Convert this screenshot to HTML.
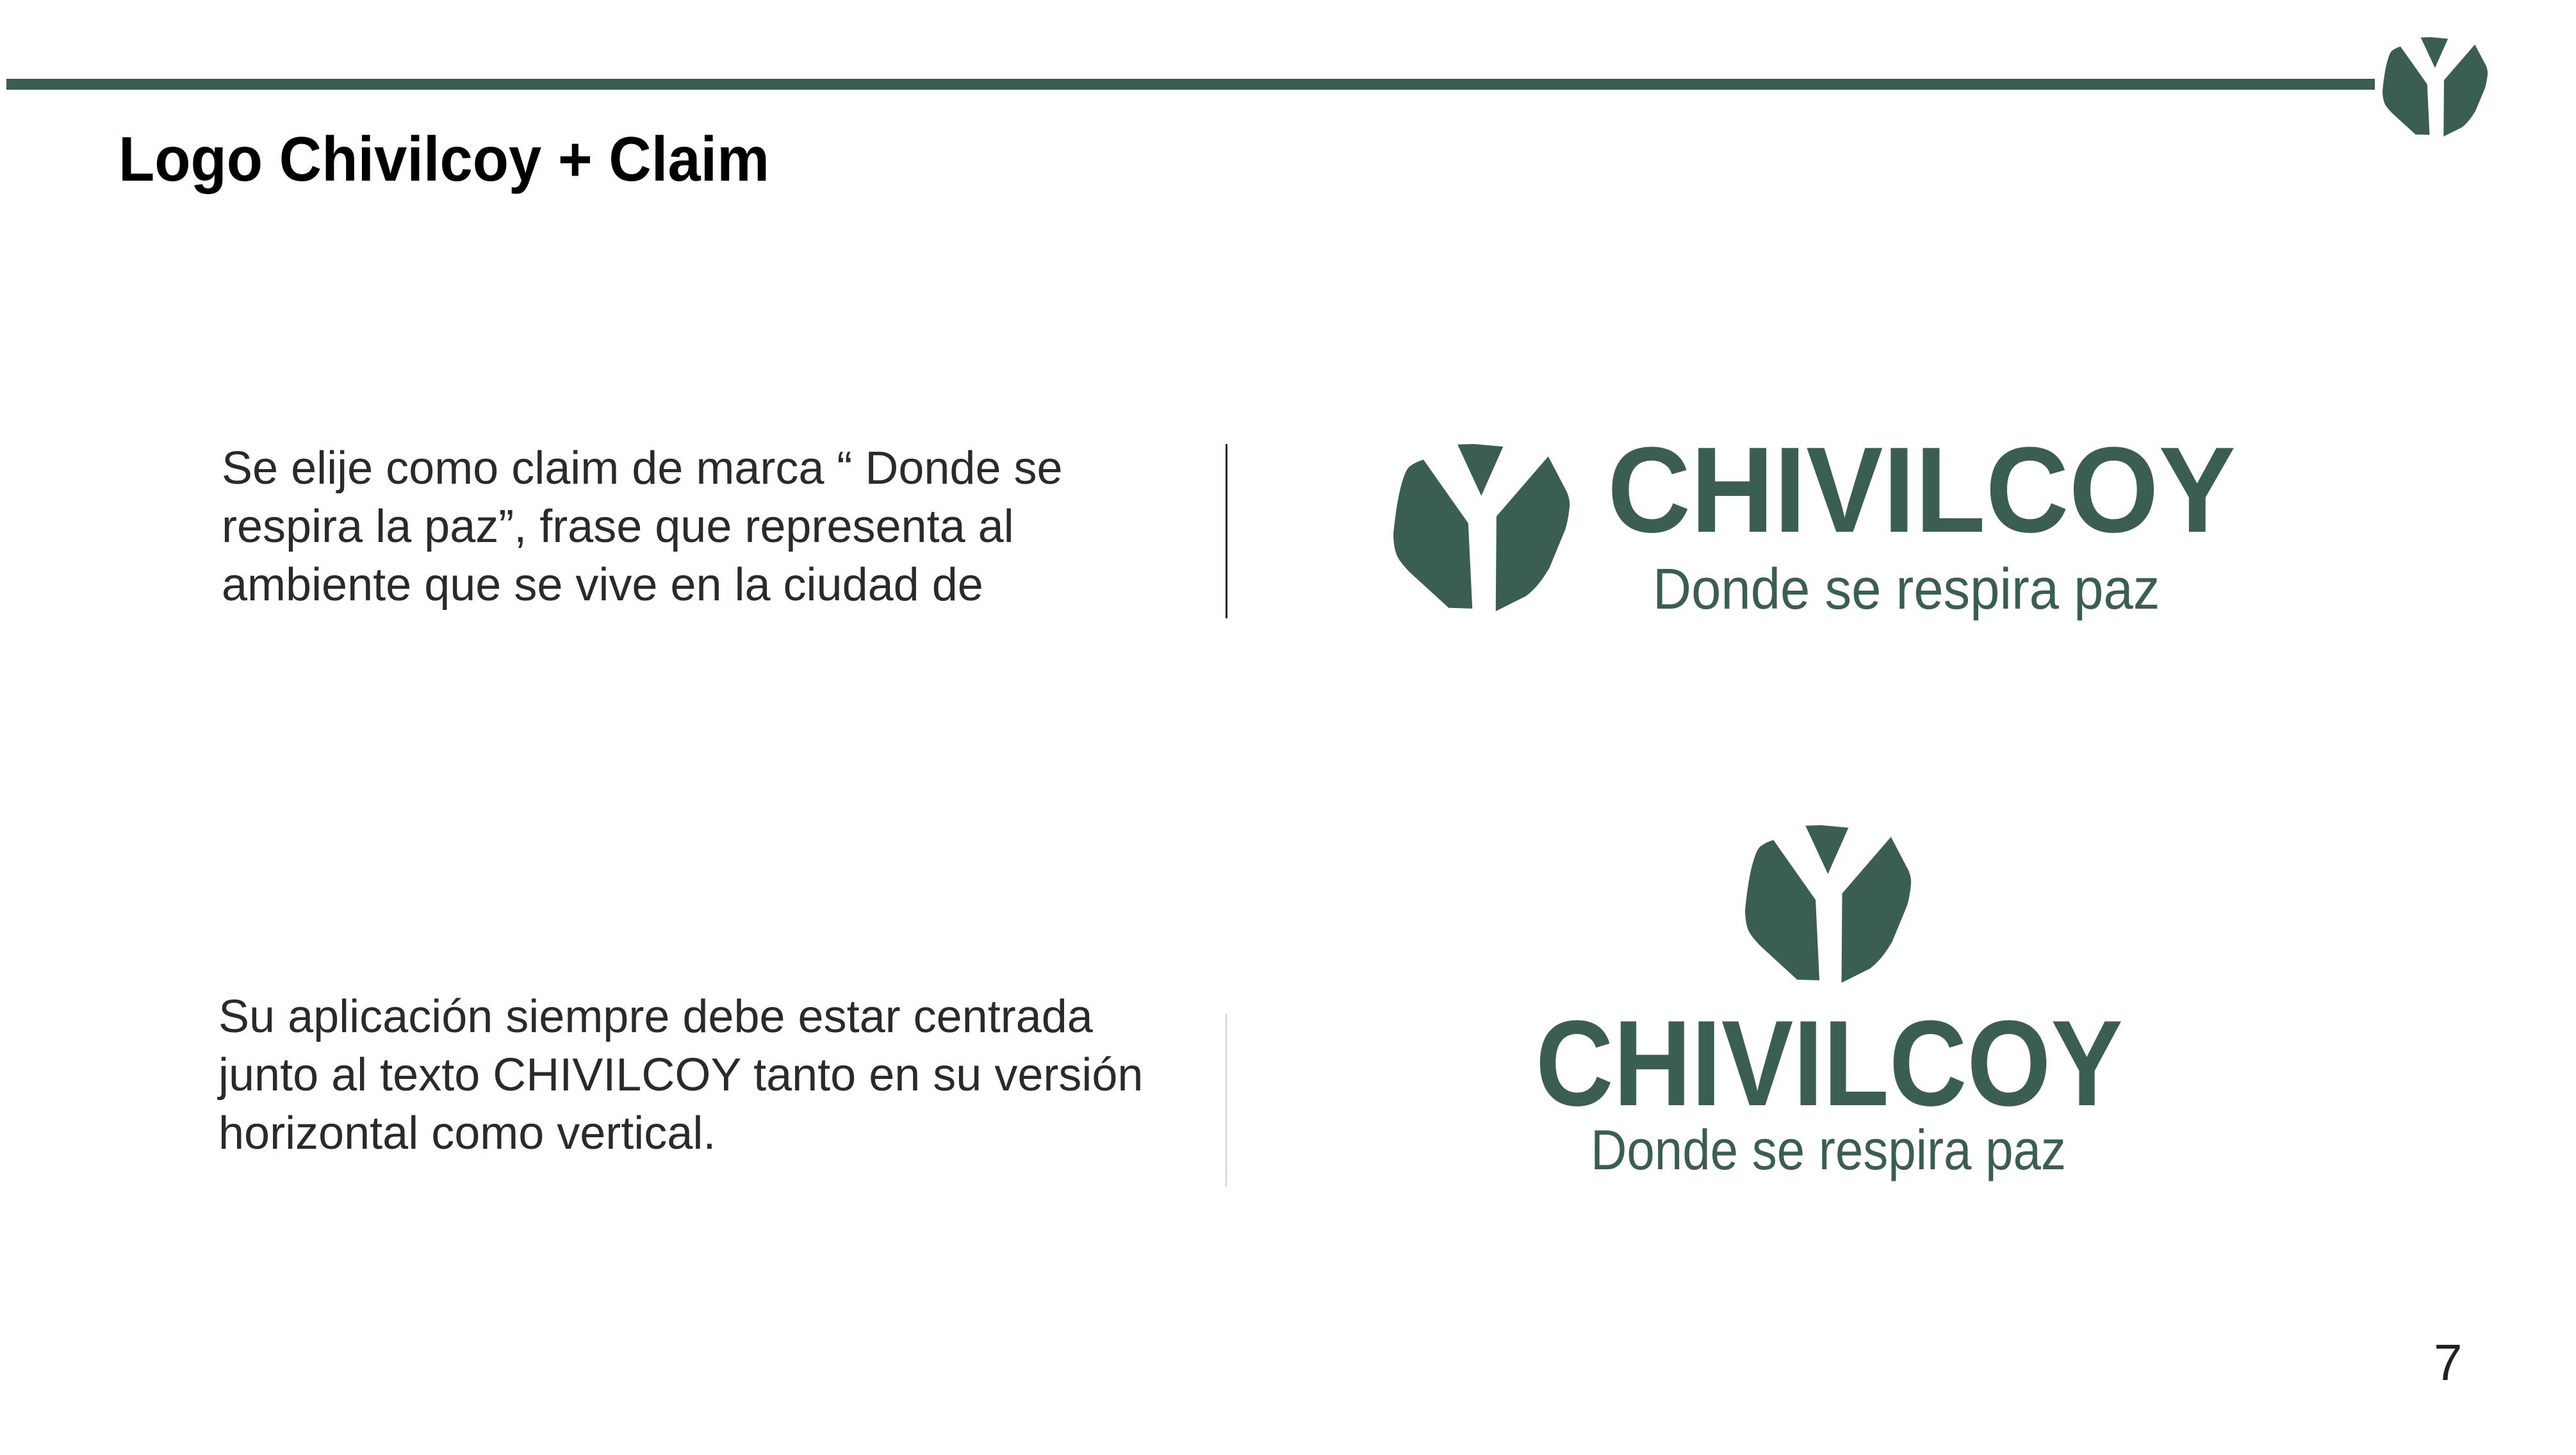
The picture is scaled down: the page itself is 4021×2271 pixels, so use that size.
<!DOCTYPE html>
<html><head><meta charset="utf-8"><style>
html,body{margin:0;padding:0;background:#fff;}
body{width:4021px;height:2271px;position:relative;overflow:hidden;font-family:"Liberation Sans",sans-serif;}
.a{position:absolute;white-space:nowrap;}
.p{font-size:72px;line-height:91px;color:#2a2a2a;font-weight:normal;}
.g{color:#3a5f50;}
svg{position:absolute;}
</style></head><body>
<svg width="0" height="0" style="position:absolute"><defs>
<symbol id="ic" viewBox="0 0 1000 1000" preserveAspectRatio="none">
<path fill="#3a5f50" d="M364 3 L457 0 L623 16 L499 310 Z"/>
<path fill="#3a5f50" d="M171 94 L425 474 L448 984 L314 980 L94 768 Q40 710 22 672 Q0 620 0 536 Q20 330 48 235 Q70 150 94 133 Q130 105 171 94 Z"/>
<path fill="#3a5f50" d="M879 74 L983 283 Q1003 330 1000 372 Q995 440 977 508 L886 740 Q820 860 750 911 L581 1000 L585 433 Z"/>
</symbol></defs></svg>

<div class="a" style="left:10px;top:123px;width:3697px;height:17px;background:#3a5f50"></div>
<svg style="left:3719px;top:58px" width="164" height="155"><use href="#ic"/></svg>

<div class="a" style="left:185px;top:199px;font-size:98px;line-height:98px;font-weight:bold;color:#000;transform:scaleX(0.94);transform-origin:0 0">Logo Chivilcoy + Claim</div>

<div class="a p" style="left:346px;top:686px">Se elije como claim de marca “ Donde se<br>respira la paz”, frase que representa al<br>ambiente que se vive en la ciudad de</div>
<div class="a" style="left:1913px;top:693px;width:3px;height:272px;background:#222"></div>

<svg style="left:2175px;top:693px" width="275" height="261"><use href="#ic"/></svg>
<div class="a g" style="left:2509px;top:670px;font-size:190px;line-height:190px;font-weight:bold;transform:scaleX(0.948);transform-origin:0 0">CHIVILCOY</div>
<div class="a g" style="left:2580px;top:875px;font-size:90px;line-height:90px;transform:scaleX(0.925);transform-origin:0 0">Donde se respira paz</div>

<div class="a p" style="left:341px;top:1542px">Su aplicación siempre debe estar centrada<br>junto al texto CHIVILCOY tanto en su versión<br>horizontal como vertical.</div>
<div class="a" style="left:1913px;top:1583px;width:2px;height:269px;background:#c9d3d6"></div>

<svg style="left:2724px;top:1288px" width="259" height="246"><use href="#ic"/></svg>
<div class="a g" style="left:2397px;top:1565px;font-size:190px;line-height:190px;font-weight:bold;transform:scaleX(0.886);transform-origin:0 0">CHIVILCOY</div>
<div class="a g" style="left:2483px;top:1751px;font-size:88px;line-height:88px;transform:scaleX(0.887);transform-origin:0 0">Donde se respira paz</div>

<div class="a" style="left:3799px;top:2087px;font-size:80px;line-height:80px;color:#222">7</div>
</body></html>
